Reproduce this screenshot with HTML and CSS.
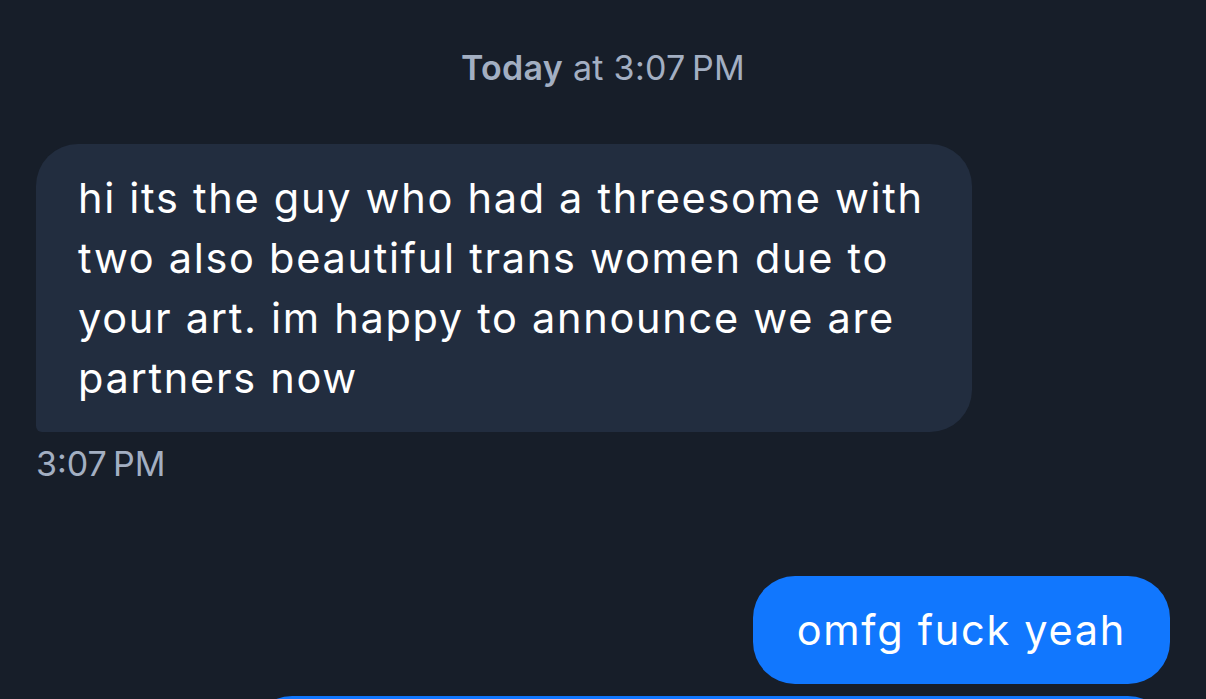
FILE: index.html
```html
<!DOCTYPE html>
<html>
<head>
<meta charset="utf-8">
<link rel="stylesheet" href="styles.css">
</head>
<body>
<div class="chat">
  <div class="day"><span class="day-strong">Today</span> at 3:07&#8239;PM</div>
  <div class="msg-in">
    <div class="bubble bubble-in">hi its the guy who had a threesome with two also beautiful trans women due to your art. im happy to announce we are partners now</div>
    <div class="time">3:07&#8239;PM</div>
  </div>
  <div class="msg-out">
    <div class="bubble bubble-out">omfg fuck yeah</div>
    <div class="bubble bubble-out bubble-next"></div>
  </div>
</div>
</body>
</html>
```
FILE: styles.css
```css
html, body {
  margin: 0;
  padding: 0;
  background: #171e29;
  height: 100%;
  overflow: hidden;
}
.chat {
  display: flex;
  flex-direction: column;
  padding: 44px 36px 0 36px;
  font-family: Inter, "Noto Sans", sans-serif;
}
.day {
  text-align: center;
  color: #a3afc2;
  font-size: 34px;
  line-height: 48px;
  letter-spacing: 0.3px;
}
.day-strong {
  font-weight: 600;
}
.msg-in {
  display: flex;
  flex-direction: column;
  align-items: flex-start;
  margin-top: 52px;
}
.bubble {
  box-sizing: border-box;
  font-size: 41.5px;
  line-height: 60px;
  letter-spacing: 1.7px;
  color: #ffffff;
  padding: 24px 42px;
  border-radius: 42px;
}
.bubble-in {
  background: #222d3f;
  max-width: 936px;
  border-bottom-left-radius: 6px;
}
.time {
  margin-top: 8px;
  color: #a3afc2;
  font-size: 34px;
  line-height: 48px;
}
.msg-out {
  display: flex;
  flex-direction: column;
  align-items: flex-end;
  gap: 12px;
  margin-top: 88px;
}
.bubble-out {
  background: #1177fe;
  padding: 24px 44px;
}
.bubble-next {
  width: 920px;
  height: 200px;
}
```
